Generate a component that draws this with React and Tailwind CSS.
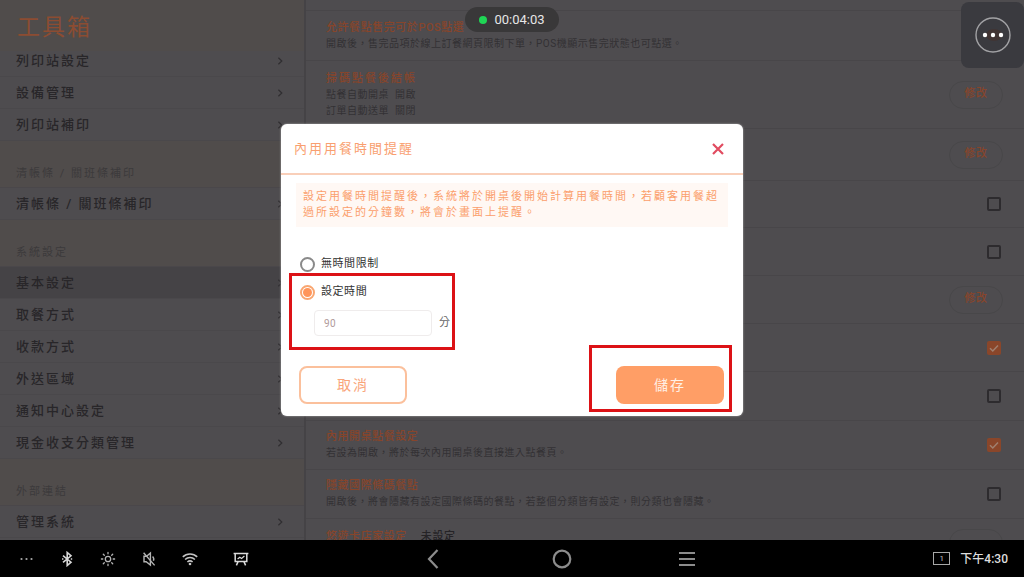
import React, { useState } from 'react';

const MENU = [
  {
    items: ['列印站設定', '設備管理', '列印站補印'],
  },
  {
    label: '清帳條 / 關班條補印',
    items: ['清帳條 / 關班條補印'],
  },
  {
    label: '系統設定',
    items: ['基本設定', '取餐方式', '收款方式', '外送區域', '通知中心設定', '現金收支分類管理'],
  },
  {
    label: '外部連結',
    items: ['管理系統'],
  },
];

const SETTINGS = [
  {
    size: 'min-h-[50px]',
    title: '允許餐點售完可於POS點選',
    lines: ['開啟後，售完品項於線上訂餐網頁限制下單，POS機顯示售完狀態也可點選。'],
  },
  {
    size: 'min-h-[68px]',
    title: '掃碼點餐後結帳',
    wide: true,
    lines: ['點餐自動開桌  開啟', '訂單自動送單  關閉'],
    control: 'edit',
  },
  { size: 'min-h-[52px]', control: 'edit' },
  { size: 'min-h-[47px]', control: 'check' },
  { size: 'min-h-12', control: 'check' },
  { size: 'min-h-12', control: 'edit' },
  { size: 'min-h-12', control: 'check', on: true },
  { size: 'min-h-[49px]', control: 'check' },
  {
    size: 'min-h-[49px]',
    title: '內用開桌點餐設定',
    lines: ['若設為開啟，將於每次內用開桌後直接進入點餐頁。'],
    control: 'check',
    on: true,
  },
  {
    size: 'min-h-[49px]',
    title: '隱藏國際條碼餐點',
    lines: ['開啟後，將會隱藏有設定國際條碼的餐點，若整個分類皆有設定，則分類也會隱藏。'],
    control: 'check',
  },
];

function Chevron() {
  return (
    <svg width="10" height="10" viewBox="0 0 10 10" fill="none" stroke="#302e31" strokeWidth="1.2">
      <path d="M3.4 1.8 6.8 5 3.4 8.2" />
    </svg>
  );
}

function Sidebar() {
  const [active, setActive] = useState('基本設定');

  return (
    <aside className="w-[306px] shrink-0 flex flex-col overflow-hidden border-r-2 border-[#454346] tracking-[2px]">
      <header className="h-[51px] shrink-0 flex items-center px-[17px] pt-1 bg-[#504c4b]">
        <h1 className="text-[23px] leading-none text-[#8c4c32]">工具箱</h1>
      </header>
      <nav className="-mt-1.5">
        {MENU.map((group, i) => (
          <div key={i}>
            {group.label && (
              <h2 className="h-[47px] flex items-end px-4 pb-1.5 text-[11px] leading-[14px] text-[#3c3a3b] bg-[#504c4b] border-b border-[#4a474a]">
                {group.label}
              </h2>
            )}
            {group.items.map((item) => (
              <button
                key={item}
                onClick={() => setActive(item)}
                className={`w-full h-8 flex items-center justify-between pl-4 pr-[19px] text-[13px] font-medium text-[#282629] border-b border-[#4a484b] ${
                  active === item ? 'bg-[#454346]' : ''
                }`}
              >
                {item}
                <Chevron />
              </button>
            ))}
          </div>
        ))}
      </nav>
    </aside>
  );
}

function EditButton() {
  return (
    <button className="w-[54px] h-7 shrink-0 rounded-full border border-[#484749] text-[11px] font-medium tracking-wider text-[#87452b]">
      修改
    </button>
  );
}

function CheckBox({ label, defaultOn }) {
  const [on, setOn] = useState(!!defaultOn);

  return (
    <label className="relative mr-0.5 w-3.5 h-3.5 shrink-0 block">
      <input
        type="checkbox"
        aria-label={label}
        checked={on}
        onChange={(e) => setOn(e.target.checked)}
        className="block appearance-none w-3.5 h-3.5 rounded-[2px] border-2 border-[#2d2b2e] checked:border-[#8a462a] checked:bg-[#8a462a]"
      />
      {on && (
        <svg className="absolute inset-0 pointer-events-none" width="14" height="14" viewBox="0 0 14 14" fill="none" stroke="#a08070" strokeWidth="1.5">
          <path d="m3 7.2 2.8 2.8L11 4.4" />
        </svg>
      )}
    </label>
  );
}

function Settings() {
  return (
    <main className="flex-1 min-w-0 overflow-hidden">
      <div className="h-[11px] border-b border-[#484649]" />
      {SETTINGS.map((row, i) => (
        <section key={i} className={`flex items-center justify-between pl-5 pr-[21px] border-b border-[#484649] ${row.size}`}>
          <div className="leading-4">
            {row.title && (
              <h3 className={`text-[11px] font-medium text-[#87452b] ${row.wide ? 'tracking-[2px]' : 'tracking-wider'}`}>{row.title}</h3>
            )}
            {row.lines?.map((line) => (
              <p key={line} className="text-[10px] tracking-wider whitespace-pre text-[#333134]">{line}</p>
            ))}
          </div>
          {row.control === 'edit' && <EditButton />}
          {row.control === 'check' && <CheckBox label={row.title || '啟用'} defaultOn={row.on} />}
        </section>
      ))}
      <section className="flex items-start justify-between pl-5 pr-[21px] pt-2.5 text-[11px] leading-4">
        <div className="flex gap-3.5 font-medium tracking-wider">
          <h3 className="text-[#87452b]">悠遊卡店家設定</h3>
          <span className="text-[#252326]">未設定</span>
        </div>
        <button aria-label="修改" className="w-[54px] h-7 rounded-full border border-[#484749]" />
      </section>
    </main>
  );
}

function RadioRow({ label, checked, onChange }) {
  return (
    <label className="h-5 flex items-center gap-1.5 text-[11px] tracking-wider text-[#333]">
      <span className="relative block w-[15px] h-[15px]">
        <input
          type="radio"
          name="dining-limit"
          checked={checked}
          onChange={onChange}
          className="block appearance-none w-[15px] h-[15px] rounded-full border-2 border-[#8a8a8a] checked:border-[#f9a671]"
        />
        {checked && <span className="absolute inset-[3px] rounded-full bg-[#ff955a] pointer-events-none" />}
      </span>
      {label}
    </label>
  );
}

function TimeDialog() {
  const [limit, setLimit] = useState('custom');
  const [minutes, setMinutes] = useState('90');

  return (
    <div role="dialog" aria-label="內用用餐時間提醒" className="w-[462px] max-w-full bg-white rounded-md shadow-[0_0_2px_#bbb]">
      <header className="h-[51px] flex items-center justify-between pl-[13px] pr-[18px] border-b-2 border-[#f9cfb9]">
        <h2 className="text-[13px] tracking-[2px] text-[#f99f70]">內用用餐時間提醒</h2>
        <button aria-label="關閉" className="text-[#e14b60]">
          <svg width="14" height="14" viewBox="0 0 14 14" fill="none" stroke="currentColor" strokeWidth="2.200">
            <path d="m2 2 10 10M12 2 2 12" />
          </svg>
        </button>
      </header>

      <div className="px-[15px] pt-2">
        <p className="px-[7px] py-1.5 text-[11px] leading-4 tracking-[2px] text-[#fb9f6c] bg-[#fff8f4]">
          設定用餐時間提醒後，系統將於開桌後開始計算用餐時間，若顧客用餐超過所設定的分鐘數，將會於畫面上提醒。
        </p>
      </div>

      <div className="flex flex-col items-start gap-2 px-[19px] pt-[27px]">
        <RadioRow label="無時間限制" checked={limit === 'none'} onChange={() => setLimit('none')} />
        <div className="relative">
          <RadioRow label="設定時間" checked={limit === 'custom'} onChange={() => setLimit('custom')} />
          <div className="flex items-center gap-[7px] pl-3.5 pt-2">
            <input
              type="text"
              aria-label="分鐘"
              value={minutes}
              onChange={(e) => setMinutes(e.target.value)}
              className="w-[118px] h-[26px] px-[9px] rounded-[4px] border border-[#efecec] text-[10px] tracking-wider text-[#b09a9a] outline-none"
            />
            <span className="text-[11px] text-[#666]">分</span>
          </div>
          <div className="absolute -left-[11px] -right-[5px] -top-[9px] -bottom-3.5 border-3 border-[#dc1216] pointer-events-none" />
        </div>
      </div>

      <footer className="flex items-center justify-between pl-[18px] pr-[19px] pt-[30px] pb-3 text-sm tracking-[2px]">
        <button className="w-[108px] h-[38px] rounded-lg border-2 border-[#fbc09c] text-[#f9a57a]">取消</button>
        <div className="relative">
          <button className="block w-[108px] h-[38px] rounded-lg bg-[#ff9e66] text-[#fff0e6]">儲存</button>
          <div className="absolute -left-[27px] -right-2 -top-[21px] -bottom-2 border-3 border-[#dc1216] pointer-events-none" />
        </div>
      </footer>
    </div>
  );
}

function SystemBar() {
  return (
    <footer className="h-[37px] shrink-0 flex items-center bg-black text-[#c4c4c4]">
      <div className="w-[41%] flex items-center gap-[25px] pl-[18px]">
        <svg width="16" height="16" viewBox="0 0 16 16" fill="#a8a8a8">
          <circle cx="3.5" cy="8" r="1.1" />
          <circle cx="8.5" cy="8" r="1.1" />
          <circle cx="13.5" cy="8" r="1.1" />
        </svg>
        <svg width="16" height="16" viewBox="0 0 16 16" fill="none" stroke="#d8d8d8" strokeWidth="1.6">
          <path d="m4 4.6 8 6.6-3.8 3.3v-13L12 4.8 4 11.4" />
          <path d="M3 8h1.4M11.8 8h1.4" />
        </svg>
        <svg width="16" height="16" viewBox="0 0 16 16" fill="none" stroke="#b4b4b4" strokeWidth="1.3" strokeLinecap="round">
          <circle cx="8" cy="8" r="2.7" />
          <path d="M8 1.4v1.4M8 13.2v1.4M1.4 8h1.4M13.2 8h1.4M3.3 3.3l1 1M11.7 11.7l1 1M3.3 12.7l1-1M11.7 4.3l1-1" />
        </svg>
        <svg width="16" height="16" viewBox="0 0 16 16" fill="none" stroke="#b4b4b4" strokeWidth="1.4">
          <path d="M3 5.2v5.6h2.2L9.4 14V2L5.6 5.2H3Z" />
          <path d="m2.6 1.8 11 12.6M11.6 5.4c1.2 1.2 1.4 3 .8 4.4" />
        </svg>
        <svg width="16" height="16" viewBox="0 0 16 16" fill="none" stroke="currentColor" strokeWidth="1.6">
          <path d="M.8 5.9c4-3.9 10.4-3.9 14.4 0M3.1 8.5c2.8-2.7 7-2.7 9.8 0M5.4 11c1.5-1.4 3.7-1.4 5.2 0" />
          <circle cx="8" cy="13" r="1.3" fill="currentColor" stroke="none" />
        </svg>
        <svg className="ml-2.5" width="16" height="16" viewBox="0 0 16 16" fill="none" stroke="#dcdcdc" strokeWidth="1.5">
          <path d="M.6 2.4h14.800M2.2 2.4v8h11.600v-8M5.2 10.4l-1.8 4M10.8 10.4l1.8 4" />
          <path d="m4.6 8 2.2-1.8 1.8 1.2 2.8-2.4" strokeWidth="1.2" />
        </svg>
      </div>
      <div className="flex items-center gap-[103px] pl-px text-[#8c8c8c]">
        <button aria-label="返回">
          <svg width="24" height="24" viewBox="0 0 24 24" fill="none" stroke="currentColor" strokeWidth="2.2">
            <path d="M16.5 3 8 12l8.500 9" />
          </svg>
        </button>
        <button aria-label="主畫面">
          <svg width="24" height="24" viewBox="0 0 24 24" fill="none" stroke="currentColor" strokeWidth="2.2">
            <circle cx="14" cy="12" r="8.3" />
          </svg>
        </button>
        <button aria-label="最近使用">
          <svg width="24" height="24" viewBox="0 0 24 24" fill="none" stroke="currentColor" strokeWidth="2">
            <path d="M4 6h16M4 12h16M4 18h16" />
          </svg>
        </button>
      </div>
      <div className="ml-auto flex items-center gap-2.5 pr-4">
        <span className="w-[17px] h-[13px] flex items-center justify-center border border-[#a8a8a8] text-[8px] leading-none">1</span>
        <time className="text-xs font-medium text-[#dedede]">下午4:30</time>
      </div>
    </footer>
  );
}

export default function App() {
  return (
    <div className="h-screen flex flex-col overflow-hidden bg-[#4e4c4f] font-['Roboto','Noto_Sans_CJK_TC',sans-serif]">
      <div className="relative flex-1 min-h-0 flex">
        <Sidebar />
        <Settings />

        {/* Dialog */}
        <div className="absolute inset-0 flex items-center justify-center">
          <TimeDialog />
        </div>

        {/* Recording timer */}
        <div className="absolute top-[7px] inset-x-0 flex justify-center pointer-events-none">
          <div className="h-[25px] flex items-center gap-[7px] px-3.5 rounded-full bg-[#393839] text-[13px] text-[#e6e6e6]">
            <span className="w-2 h-2 rounded-full bg-[#1fd655]" />
            00:04:03
          </div>
        </div>

        {/* Floating menu */}
        <button aria-label="更多" className="absolute top-0.5 right-0 w-[63px] h-[66px] flex items-center justify-center rounded-lg bg-[#3a3a3f]">
          <svg width="36" height="36" viewBox="0 0 36 36">
            <circle cx="18" cy="18" r="17" fill="none" stroke="#a2a2a5" strokeWidth="1.4" />
            <ellipse cx="19" cy="18" rx="8" ry="6" fill="#46302c" opacity="0.6" />
            <circle cx="10" cy="18" r="2.2" fill="#fff" />
            <circle cx="18" cy="18" r="2.2" fill="#fff" />
            <circle cx="26" cy="18" r="2.2" fill="#fff" />
          </svg>
        </button>
      </div>
      <SystemBar />
    </div>
  );
}
